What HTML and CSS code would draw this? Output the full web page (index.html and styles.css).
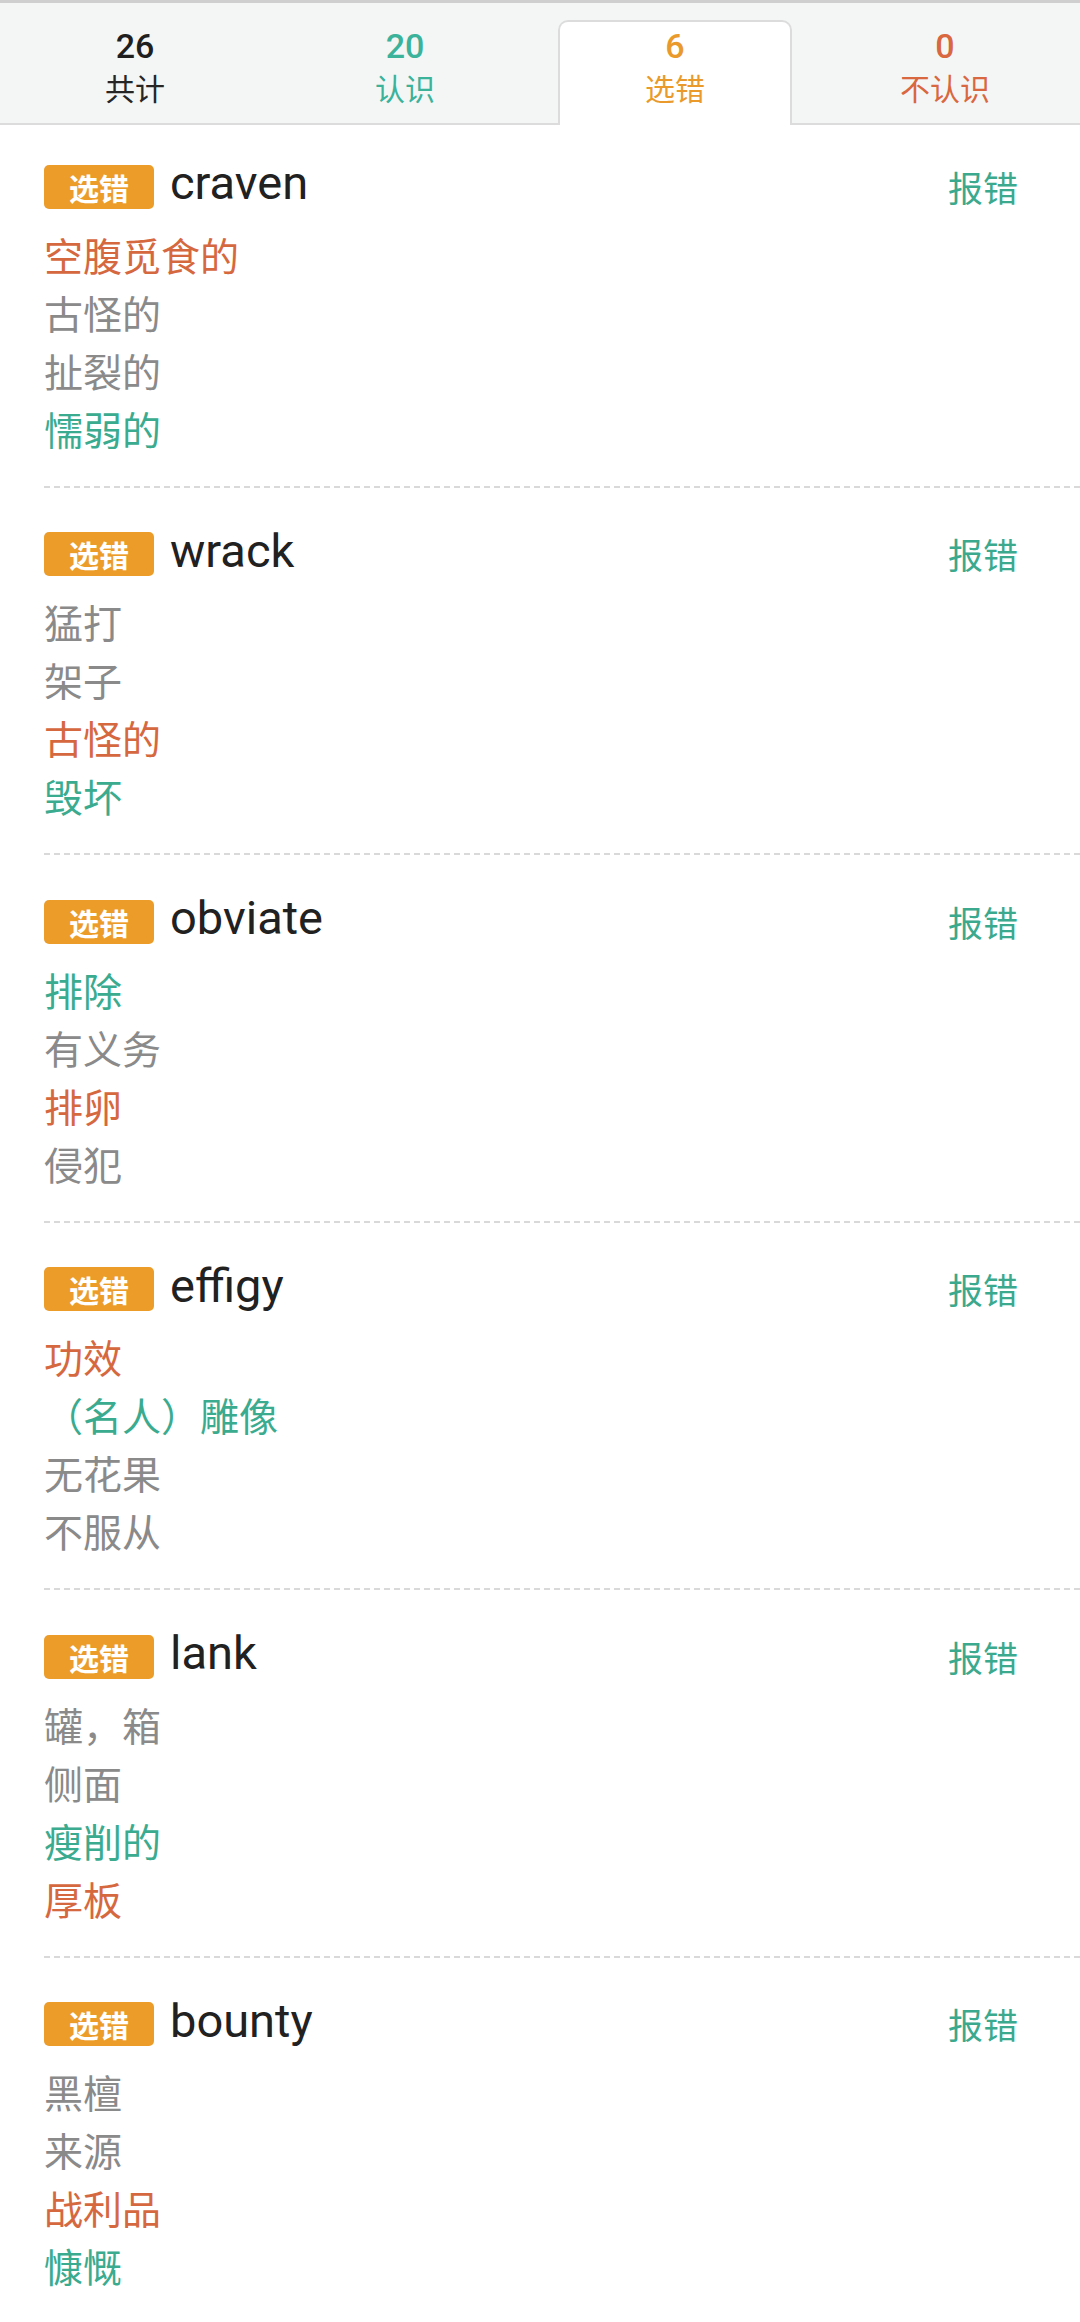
FILE: index.html
```html
<!DOCTYPE html>
<html lang="zh-CN">
<head>
<meta charset="utf-8">
<title>选错</title>
<link rel="stylesheet" href="styles.css">
</head>
<body>
<header class="tabs">
  <div class="tab tab-total"><div class="num">26</div><div class="label">共计</div></div>
  <div class="tab tab-known"><div class="num">20</div><div class="label">认识</div></div>
  <div class="tab tab-wrong active"><div class="num">6</div><div class="label">选错</div></div>
  <div class="tab tab-unknown"><div class="num">0</div><div class="label">不认识</div></div>
</header>
<main class="list">
  <section class="card">
    <div class="row"><span class="badge">选错</span><span class="word">craven</span><span class="report">报错</span></div>
    <ul class="meanings"><li class="m-wrong">空腹觅食的</li><li class="m-other">古怪的</li><li class="m-other">扯裂的</li><li class="m-right">懦弱的</li></ul>
  </section>
  <section class="card">
    <div class="row"><span class="badge">选错</span><span class="word">wrack</span><span class="report">报错</span></div>
    <ul class="meanings"><li class="m-other">猛打</li><li class="m-other">架子</li><li class="m-wrong">古怪的</li><li class="m-right">毁坏</li></ul>
  </section>
  <section class="card">
    <div class="row"><span class="badge">选错</span><span class="word">obviate</span><span class="report">报错</span></div>
    <ul class="meanings"><li class="m-right">排除</li><li class="m-other">有义务</li><li class="m-wrong">排卵</li><li class="m-other">侵犯</li></ul>
  </section>
  <section class="card">
    <div class="row"><span class="badge">选错</span><span class="word">effigy</span><span class="report">报错</span></div>
    <ul class="meanings"><li class="m-wrong">功效</li><li class="m-right">（名人）雕像</li><li class="m-other">无花果</li><li class="m-other">不服从</li></ul>
  </section>
  <section class="card">
    <div class="row"><span class="badge">选错</span><span class="word">lank</span><span class="report">报错</span></div>
    <ul class="meanings"><li class="m-other">罐，箱</li><li class="m-other">侧面</li><li class="m-right">瘦削的</li><li class="m-wrong">厚板</li></ul>
  </section>
  <section class="card">
    <div class="row"><span class="badge">选错</span><span class="word">bounty</span><span class="report">报错</span></div>
    <ul class="meanings"><li class="m-other">黑檀</li><li class="m-other">来源</li><li class="m-wrong">战利品</li><li class="m-right">慷慨</li></ul>
  </section>
</main>
</body>
</html>
```
FILE: styles.css
```css
html, body {
  margin: 0;
  padding: 0;
  background: #ffffff;
}
body {
  font-family: Roboto, "Noto Sans CJK SC", sans-serif;
  overflow: hidden;
}

/* ---------- header tabs ---------- */
.tabs {
  display: flex;
  height: 120px;
  background: #f4f6f6;
  border-top: 3px solid #cfcfcf;
  border-bottom: 2px solid #dcdcdc;
}
.tab {
  flex: 1;
  margin: 17px 18px -2px;
  padding-top: 4px;
  border: 2px solid transparent;
  border-bottom: 0;
  border-radius: 10px 10px 0 0;
  text-align: center;
}
.tab.active {
  background: #ffffff;
  border-color: #dcdcdc;
}
.num {
  font-family: Roboto, sans-serif;
  font-size: 34px;
  font-weight: 500;
  line-height: 40px;
}
.label {
  font-family: "Noto Sans CJK SC", sans-serif;
  font-size: 30px;
  line-height: 42px;
}
.tab-total .num { color: #1f1f1f; }
.tab-total .label { color: #262626; }
.tab-known .num, .tab-known .label { color: #3bb29a; }
.tab-wrong .num, .tab-wrong .label { color: #e99a2b; }
.tab-unknown .num, .tab-unknown .label { color: #d9673f; }

/* ---------- list ---------- */
.list {
  padding-left: 44px;
}
.card {
  padding: 44.5px 0 29px;
  border-bottom: 2px dashed #d9d9d9;
}
.card:first-child {
  padding-top: 39.5px;
}
.row {
  display: flex;
  align-items: center;
  height: 44px;
}
.badge {
  width: 110px;
  height: 44px;
  border-radius: 5px;
  background: #ec9c29;
  color: #ffffff;
  font-family: "Noto Sans CJK SC", sans-serif;
  font-weight: 700;
  font-size: 30px;
  line-height: 44px;
  text-align: center;
}
.word {
  margin-left: 16px;
  margin-bottom: 7px;
  font-family: Roboto, sans-serif;
  font-size: 47px;
  line-height: 44px;
  color: #212121;
}
.report {
  margin-left: auto;
  margin-right: 62px;
  font-family: "Noto Sans CJK SC", sans-serif;
  font-size: 35px;
  line-height: 44px;
  color: #3aa98d;
}
.meanings {
  list-style: none;
  margin: 16px 0 0;
  padding: 0;
  font-family: "Noto Sans CJK SC", sans-serif;
  font-size: 39px;
  line-height: 58px;
}
.m-wrong { color: #d6683f; }
.m-other { color: #8a8a8a; }
.m-right { color: #3aab8f; }
```
